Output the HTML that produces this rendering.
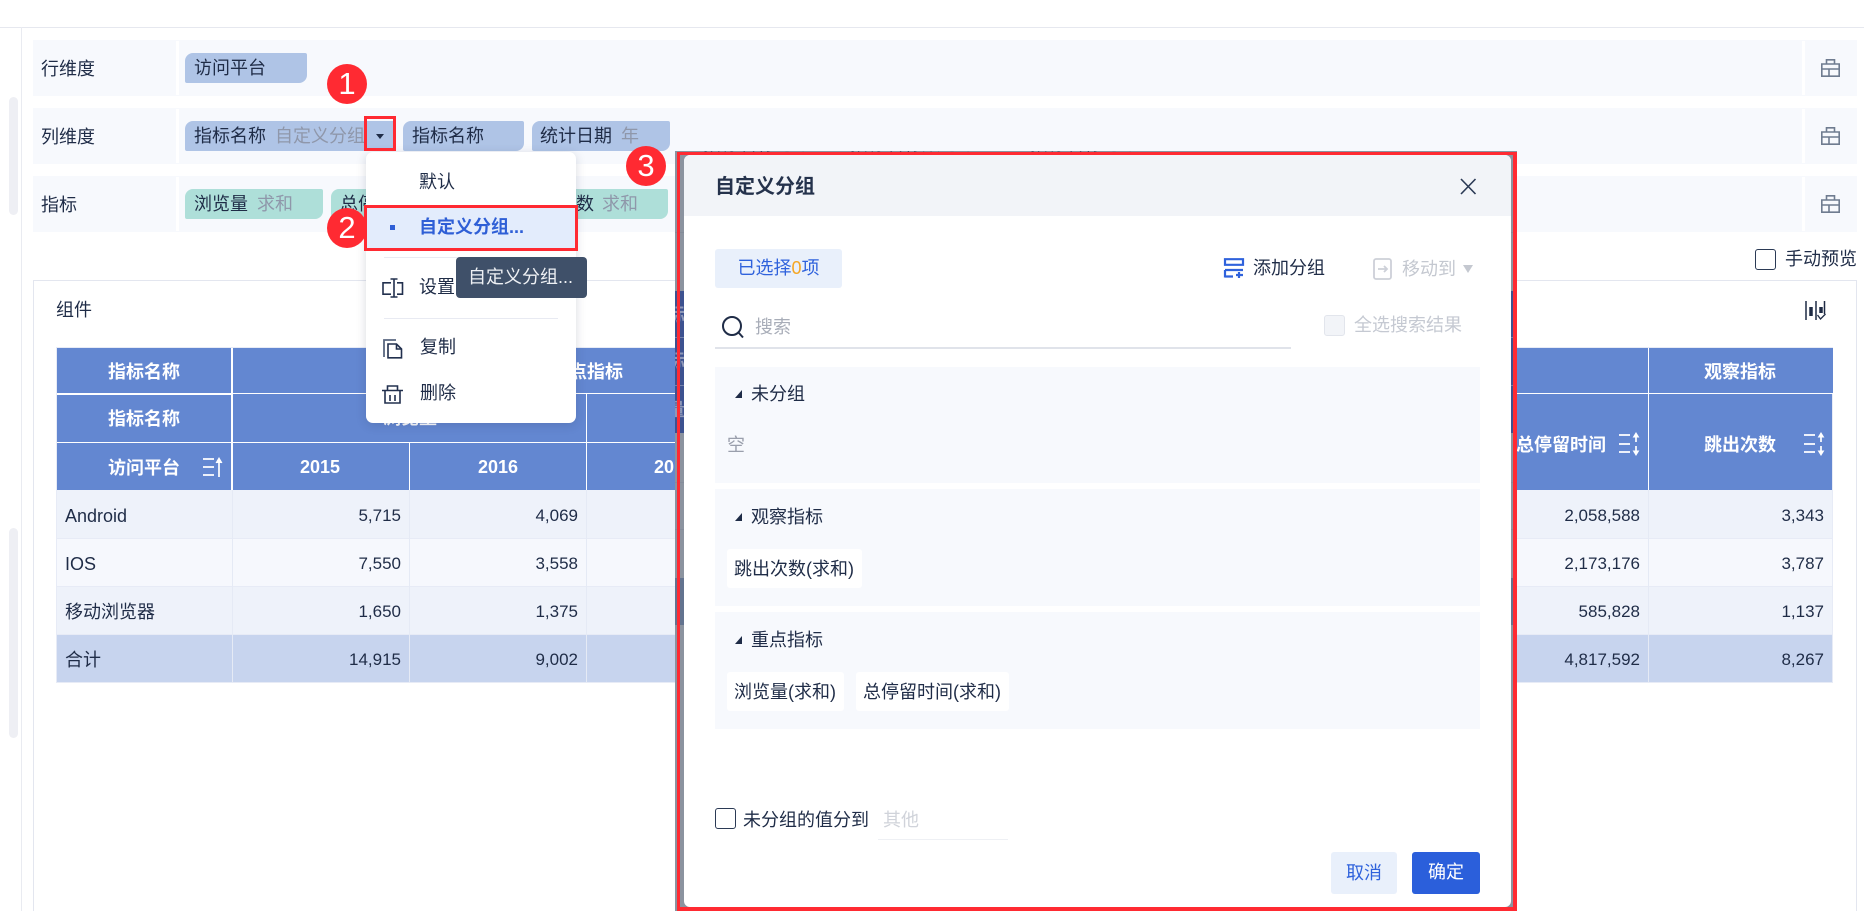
<!DOCTYPE html>
<html lang="zh"><head><meta charset="utf-8"><title>自定义分组</title>
<style>
*{box-sizing:border-box}
html,body{margin:0;padding:0;background:#fff;width:1864px;height:911px;overflow:hidden}
body{position:relative;font-family:"Liberation Sans","Noto Sans CJK SC",sans-serif;font-size:18px;color:#1f2c47}
.a{position:absolute}
.t{position:absolute;white-space:nowrap;line-height:24px;height:24px}
.g{color:#8f97aa}
.row{position:absolute;left:33px;width:1824px;height:56px;background:#f7f9fd}
.row i{position:absolute;top:1px;height:54px;width:3px;background:#fff}
.chip{position:absolute;height:30px;border-radius:8px 2px 8px 2px}
.b{background:#afc4e6}.c{background:#aedfd9}
.h{font-weight:700;color:#fff}
.n{font-size:17px;text-align:right;width:120px}
.c2{text-align:center}
.wl{position:absolute;background:#fff}
.bl{position:absolute;background:#e5eaf5}
.m{position:absolute;left:366px;top:152px;width:210px;height:271px;background:#fff;border-radius:7px;box-shadow:0 2px 10px rgba(40,50,80,.18)}
.grp{position:absolute;left:715px;width:765px;background:#f7f9fd}
.tag{position:absolute;background:#fff;height:39px;border-radius:3px;line-height:41px;padding-left:7px;white-space:nowrap}
.tri{position:absolute;left:735px;width:0;height:0;border-left:7px solid transparent;border-bottom:8px solid #1f2c47}
.circ{position:absolute;width:40px;height:40px;border-radius:50%;background:#ff2a32;color:#fff;text-align:center;font-size:31px;line-height:40px;font-family:"Liberation Sans",sans-serif}
svg{position:absolute;left:0;top:0;overflow:visible}
</style></head><body>

<div class="a" style="left:0;top:27px;width:1864px;height:1px;background:#e6e8ef"></div>
<div class="a" style="left:21px;top:27px;width:1px;height:884px;background:#e9ebf1"></div>
<div class="a" style="left:9px;top:97px;width:9px;height:118px;border-radius:5px;background:#eeeff4"></div>
<div class="a" style="left:9px;top:528px;width:9px;height:210px;border-radius:5px;background:#eeeff4"></div>

<div class="row" style="top:40px"><i style="left:143px"></i><i style="left:1769px"></i></div>
<div class="row" style="top:108px"><i style="left:143px"></i><i style="left:1769px"></i></div>
<div class="row" style="top:176px"><i style="left:143px"></i><i style="left:1769px"></i></div>
<div class="t" style="left:41px;top:57px">行维度</div>
<div class="t" style="left:41px;top:125px">列维度</div>
<div class="t" style="left:41px;top:193px">指标</div>

<div class="chip b" style="left:185px;top:53px;width:122px"></div>
<div class="t" style="left:194px;top:56px">访问平台</div>

<div class="chip b" style="left:185px;top:121px;width:211px"></div>
<div class="t" style="left:194px;top:124px">指标名称</div>
<div class="t g" style="left:275px;top:124px;width:89px;overflow:hidden">自定义分组</div>
<div class="chip b" style="left:403px;top:121px;width:121px"></div>
<div class="t" style="left:412px;top:124px">指标名称</div>
<div class="chip b" style="left:532px;top:121px;width:138px"></div>
<div class="t" style="left:540px;top:124px">统计日期</div>
<div class="t g" style="left:621px;top:124px">年</div>

<div class="chip c" style="left:185px;top:189px;width:138px"></div>
<div class="t" style="left:194px;top:192px">浏览量</div>
<div class="t g" style="left:257px;top:192px">求和</div>
<div class="chip c" style="left:331px;top:189px;width:337px"></div>
<div class="t" style="left:340px;top:192px">总停留时间</div>
<div class="t" style="left:576px;top:192px">数</div>
<div class="t g" style="left:602px;top:192px">求和</div>

<!-- right side icons -->
<svg width="1864" height="911" fill="none" stroke="#6f7c90" stroke-width="1.6">
<path d="M1821.800 64h17.400v12.200h-17.400zM1826.500 64v-4.200h8v4.200M1821.800 69h17.400M1829 69v7.200"/>
<path d="M1821.800 132h17.400v12.200h-17.400zM1826.500 132v-4.200h8v4.200M1821.800 137h17.400M1829 137v7.200"/>
<path d="M1821.800 200h17.400v12.200h-17.400zM1826.500 200v-4.200h8v4.200M1821.800 205h17.400M1829 205v7.200"/>
</svg>

<!-- preview -->
<div class="a" style="left:1755px;top:249px;width:21px;height:21px;border:1.5px solid #2b3a55;border-radius:3px"></div>
<div class="t" style="left:1785px;top:247px">手动预览</div>

<!-- card -->
<div class="a" style="left:33px;top:280px;width:1824px;height:631px;border:1px solid #e3e6ef;border-bottom:0;background:#fff"></div>
<div class="t" style="left:56px;top:298px">组件</div>
<svg width="1864" height="911" fill="none" stroke="#1e2a44">
<path d="M1806 301v19" stroke-width="1.5"/><path d="M1811 307v9" stroke-width="3.5"/><path d="M1816 301v19" stroke-width="1.5"/><path d="M1821 307v6" stroke-width="3.5"/><path d="M1824.500 301v13" stroke-width="1.5"/><path d="M1817.500 315l3 4 5-5" stroke-width="1.3"/>
</svg>

<!-- table -->
<div class="a" style="left:56px;top:347px;width:1777px;height:336px;background:#e7ebf6"></div>
<div class="a" style="left:57px;top:348px;width:1775px;height:142px;background:#6387d1"></div>
<div class="a" style="left:1648px;top:348px;width:185px;height:46px;background:#6387d1"></div>
<div class="a" style="left:57px;top:490px;width:1775px;height:48px;background:#eef2fa"></div>
<div class="a" style="left:57px;top:539px;width:1775px;height:47px;background:#f6f8fd"></div>
<div class="a" style="left:57px;top:587px;width:1775px;height:47px;background:#eef2fa"></div>
<div class="a" style="left:57px;top:635px;width:1775px;height:47px;background:#c7d4ee"></div>
<div class="wl" style="left:57px;top:393px;width:1776px;height:1px"></div>
<div class="wl" style="left:57px;top:393px;width:175px;height:2px"></div>
<div class="wl" style="left:57px;top:442px;width:620px;height:1px"></div>
<div class="wl" style="left:231px;top:348px;width:2px;height:142px"></div>
<div class="wl" style="left:409px;top:443px;width:1px;height:47px"></div>
<div class="wl" style="left:586px;top:394px;width:1px;height:96px"></div>
<div class="wl" style="left:1648px;top:348px;width:1px;height:142px"></div>
<div class="bl" style="left:232px;top:490px;width:1px;height:192px"></div>
<div class="bl" style="left:409px;top:490px;width:1px;height:192px"></div>
<div class="bl" style="left:586px;top:490px;width:1px;height:192px"></div>
<div class="bl" style="left:1648px;top:490px;width:1px;height:192px"></div>

<div class="t h" style="left:108px;top:360px">指标名称</div>
<div class="t h" style="left:108px;top:407px">指标名称</div>
<div class="t h" style="left:108px;top:456px">访问平台</div>
<div class="t h" style="left:551px;top:360px">重点指标</div>
<div class="t h" style="left:383px;top:406px">浏览量</div>
<div class="t h" style="left:300px;top:455px;font-size:18px">2015</div>
<div class="t h" style="left:478px;top:455px;font-size:18px">2016</div>
<div class="t h" style="left:654px;top:455px;font-size:18px">2017</div>
<div class="t h" style="left:1516px;top:433px;width:90px;overflow:hidden;direction:rtl">总停留时间</div>
<div class="t h" style="left:1704px;top:360px">观察指标</div>
<div class="t h" style="left:1704px;top:433px">跳出次数</div>
<svg width="1864" height="911" fill="none" stroke="#fff" stroke-width="1.7">
<path d="M203 459h11M203 467h11M203 475h11M219 477v-17"/><path d="M216 463l3-5 3 5" fill="#fff" stroke-width="1"/>
<path d="M1619 435h11M1619 444h11M1619 452h11M1636 442v-6M1636 446v6"/><path d="M1633.500 437l2.500-4 2.500 4zM1633.500 451l2.500 4 2.500-4z" fill="#fff" stroke-width="1"/>
<path d="M1804 435h11M1804 444h11M1804 452h11M1821 442v-6M1821 446v6"/><path d="M1818.500 437l2.500-4 2.500 4zM1818.500 451l2.500 4 2.500-4z" fill="#fff" stroke-width="1"/>
</svg>

<div class="t" style="left:65px;top:504px">Android</div>
<div class="t" style="left:65px;top:552px">IOS</div>
<div class="t" style="left:65px;top:600px">移动浏览器</div>
<div class="t" style="left:65px;top:648px">合计</div>
<div class="t n" style="left:281px;top:504px">5,715</div>
<div class="t n" style="left:281px;top:552px">7,550</div>
<div class="t n" style="left:281px;top:600px">1,650</div>
<div class="t n" style="left:281px;top:648px">14,915</div>
<div class="t n" style="left:458px;top:504px">4,069</div>
<div class="t n" style="left:458px;top:552px">3,558</div>
<div class="t n" style="left:458px;top:600px">1,375</div>
<div class="t n" style="left:458px;top:648px">9,002</div>
<div class="t n" style="left:1520px;top:504px">2,058,588</div>
<div class="t n" style="left:1520px;top:552px">2,173,176</div>
<div class="t n" style="left:1520px;top:600px">585,828</div>
<div class="t n" style="left:1520px;top:648px">4,817,592</div>
<div class="t n" style="left:1704px;top:504px">3,343</div>
<div class="t n" style="left:1704px;top:552px">3,787</div>
<div class="t n" style="left:1704px;top:600px">1,137</div>
<div class="t n" style="left:1704px;top:648px">8,267</div>

<!-- menu -->
<div class="m"></div>
<div class="t" style="left:419px;top:170px">默认</div>
<div class="a" style="left:364px;top:205px;width:214px;height:46px;background:#e3ecfc;border:3px solid #ff2a32"></div>
<div class="a" style="left:390px;top:225px;width:5px;height:5px;background:#2f5fd6"></div>
<div class="t" style="left:419px;top:215px;font-weight:700;color:#2f5fd6">自定义分组...</div>
<div class="a" style="left:384px;top:257px;width:174px;height:1px;background:#e8eaf2"></div>
<div class="t" style="left:419px;top:275px">设置</div>
<div class="a" style="left:384px;top:318px;width:174px;height:1px;background:#e8eaf2"></div>
<div class="t" style="left:420px;top:335px">复制</div>
<div class="t" style="left:420px;top:381px">删除</div>
<svg width="1864" height="911" fill="none" stroke="#22304e" stroke-width="1.6">
<path d="M391 282.800h-8v11.400h8M397 282.800h5.500v11.400H397M394 279v18M390.500 279h7M390.500 297h7"/>
<path d="M384 357v-17h12" stroke="#5a6780" stroke-width="1.8"/><path d="M388 344h8.500l5 5v8.800H388z"/><path d="M396.500 344v5h5"/>
<path d="M382 390.500h21M387.500 390.500V386h10v4.500M385 390.500v12.500h15v-12.500M390 395v6M395 395v6"/>
</svg>
<!-- tooltip -->
<div class="a" style="left:456px;top:257px;width:131px;height:41px;background:#3f5069;border-radius:4px"></div>
<div class="t" style="left:468px;top:265px;color:#eef0f4">自定义分组...</div>

<!-- red box 1 -->
<div class="a" style="left:364px;top:116px;width:32px;height:35px;border:3px solid #ff2a32"></div>
<div class="a" style="left:376px;top:134px;width:0;height:0;border-left:4px solid transparent;border-right:4px solid transparent;border-top:5px solid #1f2c47"></div>

<!-- backdrop strip -->
<div class="a" style="left:675px;top:151px;width:842px;height:760px;background:#8b939f;overflow:hidden">
  <div class="a" style="left:0;top:81px;width:842px;height:1px;background:#838b98"></div>
  <div class="a" style="left:0;top:140px;width:842px;height:142px;background:#3d5290"></div>
  <div class="a" style="left:0;top:186px;width:842px;height:1px;background:#7382ab"></div>
  <div class="a" style="left:0;top:234px;width:842px;height:1px;background:#7382ab"></div>
  <div class="a" style="left:0;top:331px;width:842px;height:1px;background:#848c9a"></div>
  <div class="a" style="left:0;top:378px;width:842px;height:1px;background:#848c9a"></div>
  <div class="a" style="left:0;top:427px;width:842px;height:47px;background:#63738f"></div>
  <div class="t" style="left:-8px;top:152px;font-weight:700;color:#8e98b8">标</div>
  <div class="t" style="left:-8px;top:198px;font-weight:700;color:#8e98b8">标</div>
  <div class="t" style="left:-8px;top:247px;font-weight:700;color:#8e98b8">量</div>
</div>
<!-- text bottoms peeking above modal -->
<div class="a" style="left:703px;top:151px;width:480px;height:1px;overflow:hidden">
  <div class="t" style="left:0;top:-19px;color:#1d2340">指标名称 <span style="color:#7a7f8c">求和</span></div>
  <div class="t" style="left:147px;top:-19px;color:#1d2340">指标名称数 <span style="color:#7a7f8c">求和</span></div>
  <div class="t" style="left:327px;top:-19px;color:#1d2340">指标名称 <span style="color:#7a7f8c">求和</span></div>
</div>

<!-- red rect 3 -->
<div class="a" style="left:677px;top:152px;width:840px;height:759px;border-style:solid;border-color:#ff2a32;border-width:3px 4.500px 4px 3.500px"></div>

<!-- modal -->
<div class="a" style="left:684px;top:155px;width:827px;height:752px;background:#fff;border-radius:6px;overflow:hidden">
  <div class="a" style="left:0;top:0;width:827px;height:61px;background:#f2f4f8"></div>
</div>
<div class="t" style="left:715px;top:175px;font-size:20px;font-weight:700;color:#25324c">自定义分组</div>
<svg width="1864" height="911" fill="none" stroke="#2b3a55" stroke-width="1.6"><path d="M1461 179l14.500 15M1475.500 179l-14.500 15"/></svg>

<div class="a" style="left:715px;top:249px;width:127px;height:39px;background:#e9f0fb;border-radius:3px"></div>
<div class="t c2" style="left:715px;top:256px;width:127px;color:#2f62dc">已选择<span style="color:#f5a623">0</span>项</div>

<svg width="1864" height="911" fill="none" stroke="#2f62dc" stroke-width="2.2">
<path d="M1225 259.200h18v5.600h-18zM1225 270h18M1225 270v7.500M1225 276.500h8M1239 272v6M1236 275h7"/>
</svg>
<div class="t" style="left:1253px;top:256px">添加分组</div>
<svg width="1864" height="911" fill="none" stroke="#cdd0d8" stroke-width="1.8">
<rect x="1374" y="259" width="17" height="20" rx="2"/><path d="M1378 269h9M1384 266l3 3-3 3"/>
</svg>
<div class="t" style="left:1402px;top:257px;color:#c4c8d0">移动到</div>
<div class="a" style="left:1463px;top:265px;width:0;height:0;border-left:5.500px solid transparent;border-right:5.500px solid transparent;border-top:8px solid #c4c8d0"></div>

<svg width="1864" height="911" fill="none" stroke="#1f2c47" stroke-width="2"><circle cx="732" cy="326" r="9"/><path d="M738.500 332.500l4.500 5"/></svg>
<div class="t" style="left:755px;top:315px;color:#a8adb8">搜索</div>
<div class="a" style="left:715px;top:347px;width:576px;height:2px;background:#e0e3ea"></div>
<div class="a" style="left:1324px;top:315px;width:21px;height:21px;background:#f2f4f8;border:1px solid #e2e5ec;border-radius:3px"></div>
<div class="t" style="left:1354px;top:313px;color:#c5c9d2">全选搜索结果</div>

<div class="grp" style="top:367px;height:116px"></div>
<div class="tri" style="top:390px"></div>
<div class="t" style="left:751px;top:382px">未分组</div>
<div class="t" style="left:727px;top:433px;color:#9a9fac">空</div>

<div class="grp" style="top:489px;height:117px"></div>
<div class="tri" style="top:513px"></div>
<div class="t" style="left:751px;top:505px">观察指标</div>
<div class="tag" style="left:727px;top:549px;width:135px">跳出次数(求和)</div>

<div class="grp" style="top:612px;height:117px"></div>
<div class="tri" style="top:636px"></div>
<div class="t" style="left:751px;top:628px">重点指标</div>
<div class="tag" style="left:727px;top:672px;width:117px">浏览量(求和)</div>
<div class="tag" style="left:856px;top:672px;width:153px">总停留时间(求和)</div>

<div class="a" style="left:715px;top:808px;width:21px;height:21px;border:1.5px solid #2b3a55;border-radius:3px"></div>
<div class="t" style="left:743px;top:808px">未分组的值分到</div>
<div class="t" style="left:883px;top:808px;color:#d0d3da">其他</div>
<div class="a" style="left:878px;top:839px;width:130px;height:1px;background:#eef0f4"></div>

<div class="a c2" style="left:1331px;top:852px;width:66px;height:42px;background:#e9f0fb;border-radius:3px;line-height:42px;color:#2f62dc">取消</div>
<div class="a c2" style="left:1412px;top:852px;width:68px;height:42px;background:#2b5fdb;border-radius:3px;line-height:41px;color:#fff">确定</div>

<!-- circles -->
<div class="circ" style="left:327px;top:64px">1</div>
<div class="circ" style="left:327px;top:208px">2</div>
<div class="circ" style="left:626px;top:146px">3</div>
</body></html>
